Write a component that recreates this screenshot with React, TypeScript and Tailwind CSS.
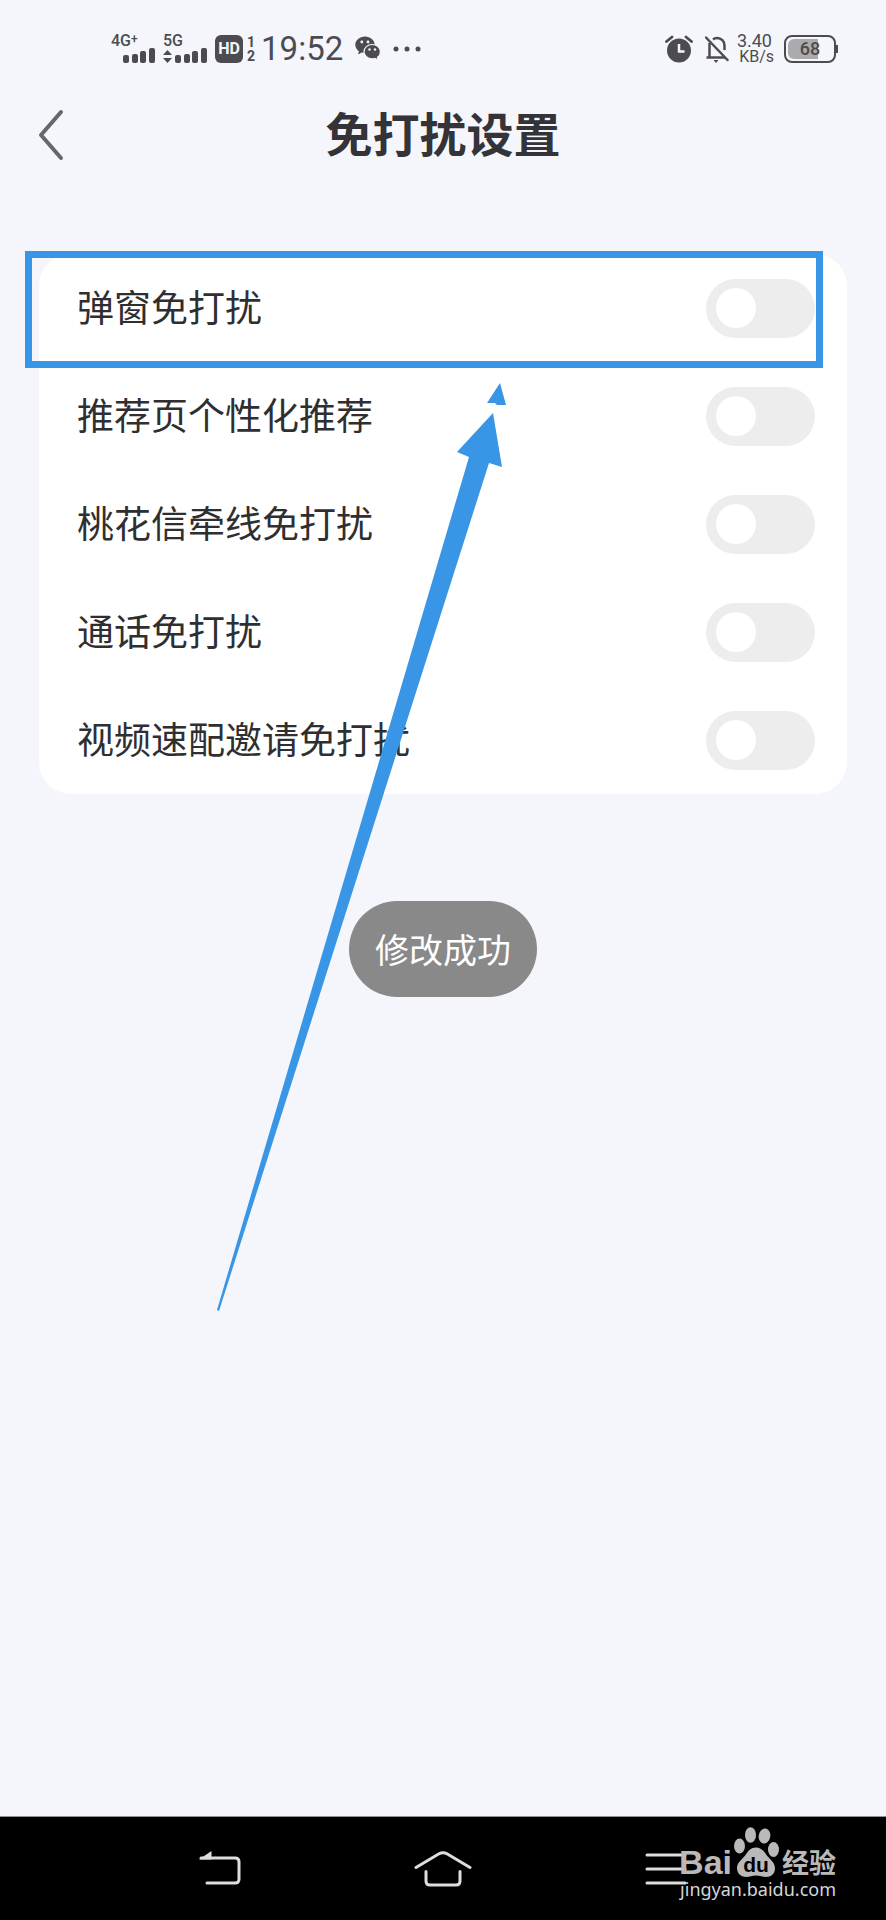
import { useState } from "react";

const SETTINGS = [
	{ id: "popup", label: "弹窗免打扰" },
	{ id: "recommend", label: "推荐页个性化推荐" },
	{ id: "letter", label: "桃花信牵线免打扰" },
	{ id: "call", label: "通话免打扰" },
	{ id: "video", label: "视频速配邀请免打扰" },
];

interface SettingRowProps {
	id: string;
	label: string;
	checked: boolean;
	onChange: (checked: boolean) => void;
}

function SettingRow({ id, label, checked, onChange }: SettingRowProps) {
	return (
		<li className="flex h-[108px] items-center justify-between pl-[38px] pr-8">
			<label htmlFor={id} className="pb-1 text-[37px] leading-[48px] text-[#2f2f31]">
				{label}
			</label>
			<input
				id={id}
				type="checkbox"
				role="switch"
				checked={checked}
				onChange={(e) => onChange(e.target.checked)}
				className="flex h-[59px] w-[109px] shrink-0 appearance-none items-center rounded-full bg-[#ededee] px-2.5 before:size-10 before:rounded-full before:bg-white before:content-[''] checked:justify-end checked:bg-[#3995e6]"
			/>
		</li>
	);
}

function SignalBars() {
	return (
		<svg width="32" height="15" viewBox="0 0 32 15" fill="currentColor">
			<rect x="0" y="7" width="6" height="8" rx="2" />
			<rect x="9" y="6" width="6" height="9" rx="2" />
			<rect x="17" y="3" width="6" height="12" rx="2" />
			<rect x="26" y="0" width="6" height="15" rx="2" />
		</svg>
	);
}

function WechatIcon() {
	return (
		<svg width="26" height="26" viewBox="0 0 26 26" fill="currentColor">
			<path d="M10 0.5C4.600 0.5 0.3 4.200 0.3 8.800c0 2.600 1.400 4.900 3.600 6.400L3 18.500l3.800-2c1 .3 2.100.5 3.200.5 5.400 0 9.700-3.700 9.700-8.200S15.400 0.500 10 0.500z" />
			<path
				d="M17.200 8.500c-4.600 0-8.200 3.200-8.200 7.200s3.600 7.200 8.200 7.200c1 0 1.900-.1 2.700-.4l3.300 1.900-.8-3c1.900-1.300 3-3.400 3-5.700 0-4-3.600-7.200-8.200-7.200z"
				stroke="#f4f6fb"
				strokeWidth="1.200"
			/>
			<g fill="#f4f6fb">
				<circle cx="6.800" cy="6" r="1.400" />
				<circle cx="13" cy="6" r="1.400" />
				<circle cx="14.500" cy="13.500" r="1.200" />
				<circle cx="20" cy="13.500" r="1.200" />
			</g>
		</svg>
	);
}

function AlarmIcon() {
	return (
		<svg width="28" height="28" viewBox="0 0 28 28" fill="none">
			<circle cx="14" cy="15.500" r="12" fill="currentColor" />
			<path d="M14 9v7.500h5.500" stroke="#f4f6fb" strokeWidth="2.500" />
			<path
				d="M1.500 6.500 7 2M26.500 6.500 21 2"
				stroke="currentColor"
				strokeWidth="2.800"
				strokeLinecap="round"
			/>
		</svg>
	);
}

function BellOffIcon() {
	return (
		<svg
			width="24"
			height="28"
			viewBox="0 0 24 28"
			fill="none"
			stroke="currentColor"
			strokeWidth="2.500"
		>
			<path d="M8 4.500C9 3.600 10.400 3 12 3c4.400 0 7.500 3.200 7.500 7.500V15" />
			<path d="M4.500 8v14.500H1.500M3 22.500h17" />
			<path d="M1 2.500 22.500 25" strokeLinecap="round" />
			<path d="M8.500 25h5l-2.500 3z" fill="currentColor" stroke="none" />
		</svg>
	);
}

function Battery() {
	return (
		<div className="flex items-center text-[#4c4c50]">
			<div className="relative flex h-7 w-[52px] items-center justify-center rounded-lg border-2 border-current">
				<span className="absolute inset-y-0.5 left-0.5 w-[30px] rounded-l-md bg-[#ababae]" />
				<span className="relative font-[Roboto] text-lg leading-5 font-medium">68</span>
			</div>
			<span className="h-2 w-0.5 bg-current" />
		</div>
	);
}

function StatusBar() {
	return (
		<div className="flex h-[98px] items-center pr-12 pl-[111px] font-[Roboto] text-[#4c4c50]">
			<div className="flex h-7 flex-col justify-between">
				<span className="text-base leading-3 font-medium">
					4G<sup className="top-[-3px] text-xs leading-none">+</sup>
				</span>
				<span className="pl-3">
					<SignalBars />
				</span>
			</div>
			<div className="ml-2 flex h-7 flex-col justify-between">
				<span className="text-base leading-3 font-medium">5G</span>
				<span className="flex items-end gap-[3px]">
					<svg width="9" height="13" viewBox="0 0 9 13" fill="currentColor">
						<path d="M4.500 0 9 5H0zM4.500 13 0 8h9z" />
					</svg>
					<SignalBars />
				</span>
			</div>
			<span className="ml-2 flex size-7 items-center justify-center rounded-md bg-[#4c4c50] text-base leading-none font-bold text-[#f4f6fb]">
				HD
			</span>
			<span className="ml-1 flex flex-col text-sm leading-[14px] font-bold">
				<span>1</span>
				<span>2</span>
			</span>
			<time className="ml-1.5 text-[33px] leading-9">19:52</time>
			<span className="ml-3">
				<WechatIcon />
			</span>
			<svg className="ml-3" width="28" height="6" viewBox="0 0 28 6" fill="currentColor">
				<circle cx="3" cy="3" r="2.500" />
				<circle cx="14" cy="3" r="2.500" />
				<circle cx="25" cy="3" r="2.500" />
			</svg>
			<div className="ml-auto flex items-center">
				<AlarmIcon />
				<span className="ml-3">
					<BellOffIcon />
				</span>
				<span className="mr-2.5 ml-2 flex flex-col items-end text-lg leading-4">
					<span className="pr-0.5">3.40</span>
					<span className="text-base leading-4">KB/s</span>
				</span>
				<Battery />
			</div>
		</div>
	);
}

// Pen arrow drawn over the list, pointing at the highlighted row
function PointerArrow() {
	return (
		<svg
			className="pointer-events-none absolute top-[129px] left-[178px] z-10"
			width="289"
			height="928"
			viewBox="217 383 289 928"
			fill="#3995e6"
		>
			<path d="M500 383l6 22h-9l-2-2h-8z" />
			<path d="M493 413l9 54-13-4L219 1311l-2-1L469 457l-12-5z" />
		</svg>
	);
}

function Watermark() {
	return (
		<div className="pointer-events-none absolute top-2.5 right-[50px] flex flex-col items-end text-[#b9b9b9]">
			<div className="flex h-[50px] items-end">
				<span className="font-['Liberation_Sans'] text-[34px] leading-[30px] font-bold">Bai</span>
				<svg className="mx-0.5" width="46" height="50" viewBox="0 0 46 50">
					<g fill="currentColor">
						<ellipse cx="5.500" cy="19" rx="5.500" ry="7.500" />
						<ellipse cx="16.500" cy="8" rx="5.500" ry="7.800" />
						<ellipse cx="30.500" cy="9" rx="5.800" ry="7.500" transform="rotate(10 30.500 9)" />
						<ellipse cx="39.500" cy="22.500" rx="5.500" ry="7.500" />
						<path d="M22 20.500c5 0 8 3.500 10.500 7.500 3 4.500 8.500 7 8.500 13.500 0 5-4 8.500-9 8.500-4 0-6-1.500-10-1.500S16 50 12 50c-5 0-9-3.500-9-9 0-6 5.500-8.500 8.500-13 2.500-4 5.500-7.500 10.500-7.500z" />
					</g>
					<text
						x="22"
						y="45"
						textAnchor="middle"
						fill="#000"
						className="font-['Liberation_Sans'] text-[21px] font-bold"
					>
						du
					</text>
				</svg>
				<span className="text-[27px] leading-[30px] font-bold">经验</span>
			</div>
			<span className="font-['Noto_Sans'] text-lg leading-6 text-[#d6d6d6]">
				jingyan.baidu.com
			</span>
		</div>
	);
}

function NavBar() {
	return (
		<nav className="relative mt-auto grid h-[104px] grid-cols-3 items-center border-t border-[#8f8f94] bg-black px-[108px] text-[#dedede]">
			<button type="button" aria-label="返回" className="flex justify-center">
				<svg width="44" height="36" viewBox="0 0 44 36" fill="none">
					<path d="M1 8.500 13.500 0v8.500z" fill="currentColor" />
					<path
						d="M3 7h34q4 0 4 4v17q0 4-4 4H9"
						stroke="currentColor"
						strokeWidth="3"
						strokeLinecap="round"
					/>
				</svg>
			</button>
			<button type="button" aria-label="主页" className="flex justify-center">
				<svg
					width="58"
					height="36"
					viewBox="0 0 58 36"
					fill="none"
					stroke="currentColor"
					strokeWidth="3"
					strokeLinecap="round"
				>
					<path d="M2 16.500 25 2.800q4-2.200 8 0L56 16.500" />
					<path d="M12 20.500V30q0 4 4 4h26q4 0 4-4v-9.500" />
				</svg>
			</button>
			<button type="button" aria-label="菜单" className="flex justify-center">
				<svg
					width="42"
					height="32"
					viewBox="0 0 42 32"
					stroke="currentColor"
					strokeWidth="3"
					strokeLinecap="round"
				>
					<path d="M2 2h38M2 16h38M2 30h38" />
				</svg>
			</button>
			<Watermark />
		</nav>
	);
}

export default function App() {
	const [enabled, setEnabled] = useState<Record<string, boolean>>({});

	return (
		<div className="flex min-h-screen flex-col bg-[#f4f6fb] font-['Noto_Sans_CJK_SC',sans-serif]">
			<StatusBar />
			<header className="grid h-[74px] grid-cols-[64px_1fr_64px] items-center px-6">
				<button type="button" aria-label="返回" className="pl-3.5 text-[#67676b]">
					<svg
						width="26"
						height="52"
						viewBox="0 0 26 52"
						fill="none"
						stroke="currentColor"
						strokeWidth="4"
						strokeLinecap="round"
						strokeLinejoin="round"
					>
						<path d="M23 3 3 26l20 23" />
					</svg>
				</button>
				<h1 className="pb-1.5 text-center text-[47px] leading-[60px] font-bold text-[#333338]">
					免打扰设置
				</h1>
			</header>
			<main className="px-[39px] pt-[82px]">
				<section className="relative rounded-[32px] bg-white">
					<ul>
						{SETTINGS.map((s) => (
							<SettingRow
								key={s.id}
								id={s.id}
								label={s.label}
								checked={!!enabled[s.id]}
								onChange={(value) => setEnabled({ ...enabled, [s.id]: value })}
							/>
						))}
					</ul>
					<div className="pointer-events-none absolute -top-[3px] right-6 -left-3.5 h-[117px] border-[7px] border-[#3995e6]" />
					<PointerArrow />
				</section>
				<div
					role="status"
					className="mx-auto mt-[107px] flex h-24 w-[188px] items-center justify-center rounded-full bg-[#89898a] text-[34px] leading-[44px] text-white"
				>
					修改成功
				</div>
			</main>
			<NavBar />
		</div>
	);
}
